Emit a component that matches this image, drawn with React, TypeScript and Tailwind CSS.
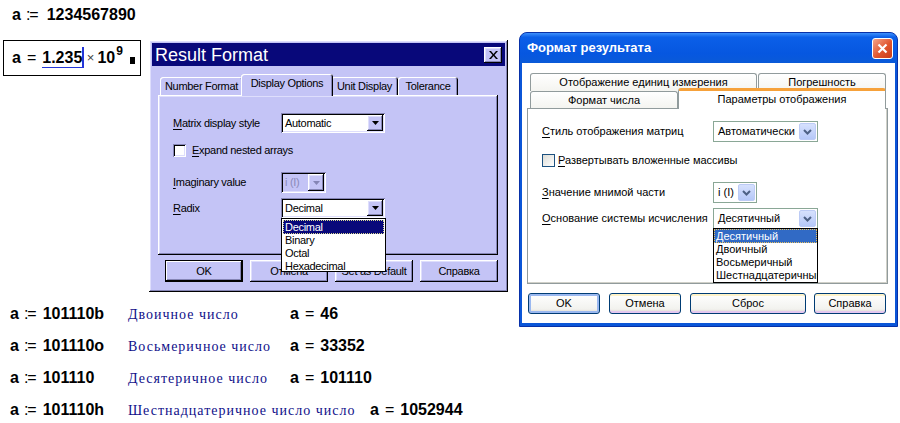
import React from "react";

/* win95 bevels for the lavender Mathcad dialog */
const raised =
  "shadow-[inset_-1px_-1px_0_#000,inset_1px_1px_0_#fff,inset_-2px_-2px_0_#8585b5,inset_2px_2px_0_#dedefc]";
const sunken =
  "shadow-[inset_1px_1px_0_#8585b5,inset_-1px_-1px_0_#fff,inset_2px_2px_0_#000,inset_-2px_-2px_0_#dedefc]";

function U({ children }: { children: React.ReactNode }) {
  return <span className="underline underline-offset-[2px]">{children}</span>;
}

function Arrow95({ color = "#000" }: { color?: string }) {
  return (
    <svg width="7" height="4" viewBox="0 0 7 4">
      <path d="M0 0h7L3.5 4z" fill={color} />
    </svg>
  );
}

function Combo95({
  width,
  text,
  disabled,
  children,
}: {
  width: string;
  text: string;
  disabled?: boolean;
  children?: React.ReactNode;
}) {
  return (
    <div
      className={`relative ${width} h-full p-[2px] flex ${sunken} ${
        disabled ? "bg-[#c4c4f6] text-[#8a8ab8]" : "bg-white"
      }`}
    >
      <div className="flex-1 pl-[2px] flex items-center">{text}</div>
      <div className={`w-[16px] h-full bg-[#c4c4f6] flex items-center justify-center ${raised}`}>
        <Arrow95 color={disabled ? "#8585b5" : "#000"} />
      </div>
      {children}
    </div>
  );
}

function Tab95({
  label,
  width,
  active,
}: {
  label: string;
  width: string;
  active?: boolean;
}) {
  return (
    <div
      className={`${width} rounded-t-[3px] bg-[#c4c4f6] flex items-center justify-center shadow-[inset_1px_1px_0_#fff,inset_-1px_0_0_#000,inset_-2px_0_0_#8585b5] ${
        active ? "h-[22px] -mx-[2px] -mb-[1px] z-10 pb-[3px]" : "h-[18px]"
      }`}
    >
      {label}
    </div>
  );
}

function Button95({ label, isDefault }: { label: string; isDefault?: boolean }) {
  return (
    <div
      className={`w-[78px] h-[22px] bg-[#c4c4f6] flex items-center justify-center ${
        isDefault
          ? "shadow-[inset_0_0_0_1px_#000,inset_-2px_-2px_0_#000,inset_2px_2px_0_#fff,inset_-3px_-3px_0_#8585b5]"
          : raised
      }`}
    >
      {label}
    </div>
  );
}

function ResultFormat() {
  return (
    <div
      className={`w-[359px] h-[252px] bg-[#c4c4f6] p-[3px] flex flex-col text-[11px] tracking-[-0.3px] ${raised}`}
    >
      {/* TITLE */}
      <div className="h-[23px] bg-[#08087a] flex items-center justify-between pl-[3px] pr-[3px]">
        <span className="text-white text-[18px] leading-none tracking-normal">Result Format</span>
        <div className={`w-[18px] h-[16px] bg-[#c4c4f6] flex items-center justify-center ${raised}`}>
          <svg width="9" height="8" viewBox="0 0 9 8">
            <path d="M0 0h2l2.5 3 2.5-3h2L5.5 4 9 8H7L4.5 5 2 8H0l3.5-4z" fill="#000" />
          </svg>
        </div>
      </div>

      <div className="pl-[6px] pr-[7px] pt-[8px]">
        {/* TABS */}
        <div className="flex items-end h-[21px] pl-[2px] relative z-10">
          <Tab95 label="Number Format" width="w-[83px]" />
          <Tab95 label="Display Options" width="w-[92px]" active />
          <Tab95 label="Unit Display" width="w-[67px]" />
          <Tab95 label="Tolerance" width="w-[60px]" />
        </div>

        {/* PANEL */}
        <div className={`h-[160px] pl-[15px] pt-[18px] ${raised}`}>
          <div className="flex items-center h-[20px]">
            <span className="w-[108px]">
              <U>M</U>atrix display style
            </span>
            <Combo95 width="w-[104px]" text="Automatic" />
          </div>
          <div className="flex items-center h-[13px] mt-[11px]">
            <div className={`w-[13px] h-[13px] bg-white ${sunken}`} />
            <span className="ml-[6px]">
              <U>E</U>xpand nested arrays
            </span>
          </div>
          <div className="flex items-center h-[21px] mt-[15px]">
            <span className="w-[108px]">
              <U>I</U>maginary value
            </span>
            <Combo95 width="w-[45px]" text="i (I)" disabled />
          </div>
          <div className="flex items-center h-[20px] mt-[5px]">
            <span className="w-[108px]">
              <U>R</U>adix
            </span>
            <Combo95 width="w-[104px]" text="Decimal">
              <div className="absolute left-0 top-full w-[105px] h-[54px] border border-black bg-white z-30 pt-[1px]">
                <div className="h-[14px] mx-[1px] px-[2px] flex items-center bg-[#08087a] text-white outline-1 outline-dotted outline-[#d8d890] -outline-offset-1">
                  Decimal
                </div>
                <div className="h-[13px] px-[3px] flex items-center">Binary</div>
                <div className="h-[13px] px-[3px] flex items-center">Octal</div>
                <div className="h-[13px] px-[3px] flex items-center">Hexadecimal</div>
              </div>
            </Combo95>
          </div>
        </div>

        {/* BUTTONS */}
        <div className="flex gap-[7px] mt-[5px] pl-[7px]">
          <Button95 label="OK" isDefault />
          <Button95 label="Отмена" />
          <Button95 label="Set as Default" />
          <Button95 label="Справка" />
        </div>
      </div>
    </div>
  );
}

/* XP styled russian dialog */
function ComboXP({
  width,
  text,
  children,
}: {
  width: string;
  text: string;
  children?: React.ReactNode;
}) {
  return (
    <div className={`relative ${width} h-full border border-[#8aa796] bg-white flex p-[1px]`}>
      <div className="flex-1 pl-[3px] flex items-center">{text}</div>
      <div className="w-[17px] h-full rounded-[2px] border border-[#bccbf5] bg-[linear-gradient(to_bottom,#d6e1fd,#b5c8f8)] flex items-center justify-center">
        <svg width="9" height="6" viewBox="0 0 9 6">
          <path d="M1 1l3.5 3.5L8 1" stroke="#4d6185" strokeWidth="2" fill="none" />
        </svg>
      </div>
      {children}
    </div>
  );
}

function TabXP({
  label,
  width,
  active,
}: {
  label: string;
  width: string;
  active?: boolean;
}) {
  return (
    <div
      className={`${width} flex items-center justify-center rounded-t-[3px] border border-b-0 border-[#919b9c] ${
        active
          ? "h-[21px] -mb-[1px] z-10 bg-white border-t-[3px] border-t-[#f6a13a] pb-[2px]"
          : "h-full bg-[linear-gradient(to_bottom,#ffffff,#f4f4f0)]"
      }`}
    >
      {label}
    </div>
  );
}

function ButtonXP({
  label,
  width,
  isDefault,
}: {
  label: string;
  width: string;
  isDefault?: boolean;
}) {
  return (
    <div
      className={`${width} h-[21px] rounded-[3px] border border-[#003c74] bg-[linear-gradient(to_bottom,#ffffff,#f2f2ee_80%,#d6d0c5)] flex items-center justify-center ${
        isDefault ? "shadow-[inset_0_0_0_2px_#9ab8f0]" : "shadow-[inset_0_-2px_0_#e5c8f0,inset_0_2px_0_#fff3c8]"
      }`}
    >
      {label}
    </div>
  );
}

function FormatDialog() {
  return (
    <div className="w-[379px] h-[295px] rounded-t-[8px] bg-[#0b56d8] border border-[#0831a8] flex flex-col text-[11px]">
      {/* TITLE */}
      <div className="h-[30px] rounded-t-[7px] bg-[linear-gradient(to_bottom,#3d90fb_0%,#0b5fe8_14%,#0657e0_70%,#0a5ad8_100%)] flex items-center justify-between pl-[7px] pr-[4px]">
        <span className="text-white font-bold text-[13px]">Формат результата</span>
        <div className="w-[21px] h-[21px] rounded-[3px] border border-white bg-[linear-gradient(135deg,#f5a58a,#e0552e_55%,#c83c1a)] flex items-center justify-center">
          <svg width="11" height="11" viewBox="0 0 11 11">
            <path d="M1.5 1.5l8 8M9.5 1.5l-8 8" stroke="#fff" strokeWidth="2.2" />
          </svg>
        </div>
      </div>

      <div className="flex-1 bg-white mx-[2px] mb-[3px] pl-[5px] pr-[7px] pt-[10px]">
        {/* TABS */}
        <div className="pl-[3px] pr-[1px]">
          <div className="flex h-[18px]">
            <TabXP label="Отображение единиц измерения" width="w-[227px]" />
            <TabXP label="Погрешность" width="w-[128px] ml-[1px]" />
          </div>
          <div className="flex items-end h-[17px] relative z-10">
            <TabXP label="Формат числа" width="w-[148px]" />
            <TabXP label="Параметры отображения" width="w-[208px]" active />
          </div>
        </div>

        {/* PANEL */}
        <div className="h-[176px] border border-[#919b9c] shadow-[inset_-1px_-1px_0_#d0d0c8] pl-[14px] pt-[12px]">
          <div className="flex items-center h-[21px]">
            <span className="w-[171px]">
              <U>С</U>тиль отображения матриц
            </span>
            <ComboXP width="w-[105px]" text="Автоматически" />
          </div>
          <div className="flex items-center h-[13px] mt-[12px]">
            <div className="w-[13px] h-[13px] border border-[#1c5180] bg-[linear-gradient(135deg,#dcdcd6,#ffffff)]" />
            <span className="ml-[3px]">
              <U>Р</U>азвертывать вложенные массивы
            </span>
          </div>
          <div className="flex items-center h-[21px] mt-[15px]">
            <span className="w-[171px]">
              <U>З</U>начение мнимой части
            </span>
            <ComboXP width="w-[44px]" text="i (I)" />
          </div>
          <div className="flex items-center h-[21px] mt-[5px]">
            <span className="w-[171px]">
              <U>О</U>снование системы исчисления
            </span>
            <ComboXP width="w-[105px]" text="Десятичный">
              <div className="absolute -left-[1px] top-full w-[105px] h-[55px] border border-black bg-white z-30 overflow-hidden whitespace-nowrap">
                <div className="h-[14px] px-[2px] flex items-center bg-[#316ac5] text-white outline-1 outline-dotted outline-[#e8c060] -outline-offset-1">
                  Десятичный
                </div>
                <div className="h-[13px] px-[2px] flex items-center">Двоичный</div>
                <div className="h-[13px] px-[2px] flex items-center">Восьмеричный</div>
                <div className="h-[13px] px-[2px] flex items-center">Шестнадцатеричный</div>
              </div>
            </ComboXP>
          </div>
        </div>

        {/* BUTTONS */}
        <div className="flex mt-[9px] pl-[1px]">
          <ButtonXP label="OK" width="w-[72px]" isDefault />
          <ButtonXP label="Отмена" width="w-[72px] ml-[9px]" />
          <ButtonXP label="Сброс" width="w-[116px] ml-[9px]" />
          <ButtonXP label="Справка" width="w-[72px] ml-[8px]" />
        </div>
      </div>
    </div>
  );
}

/* mathcad rows */
const rows = [
  { def: "101110b", note: "Двоичное число", res: "46", noteW: "w-[162px]" },
  { def: "101110o", note: "Восьмеричное число", res: "33352", noteW: "w-[162px]" },
  { def: "101110", note: "Десятеричное число", res: "101110", noteW: "w-[162px]" },
  { def: "101110h", note: "Шестнадцатеричное число число", res: "1052944", noteW: "w-[242px]" },
];

export default function App() {
  return (
    <div className="w-[900px] h-[423px] bg-white flex overflow-hidden font-['Liberation_Sans',Arial,sans-serif] text-black">
      <div className="w-[519px] shrink-0 flex flex-col">
        <div className="flex">
          <div className="w-[149px] shrink-0">
            <div className="h-[30px] pl-[12px] pt-[6px] flex text-[16px] font-bold leading-[18px]">
              <span>a</span>
              <span className="font-normal ml-[5px] mr-[9px] tracking-[-1px]">:=</span>
              <span>1234567890</span>
            </div>

            <div className="ml-[3px] mt-[10px] w-[138px] h-[36px] border border-black flex items-center pl-[8px] text-[16px] font-bold">
              <span>a</span>
              <span className="font-normal mx-[6px]">=</span>
              <span className="border-b-[1.5px] border-[#2436d8] leading-[18px]">1.235</span>
              <span className="w-[1.5px] h-[21px] bg-[#2436d8] mt-[-2px]" />
              <span className="font-normal text-[13px] text-[#444] mx-[3px]">×</span>
              <span>10</span>
              <span className="text-[12px] relative -top-[7px] ml-[1px]">9</span>
              <span className="w-[5px] h-[7px] bg-black ml-[7px] mt-[5px]" />
            </div>
          </div>

          <div className="mt-[40px]">
            <ResultFormat />
          </div>
        </div>

        {/* ROWS */}
        <div className="mt-[6px] flex flex-col">
          {rows.map((r) => (
            <div key={r.def} className="h-[32px] flex items-center pl-[10px] text-[16px] font-bold">
              <div className="w-[118px] flex">
                <span>a</span>
                <span className="font-normal ml-[5px] mr-[7px] tracking-[-1px]">:=</span>
                <span>{r.def}</span>
              </div>
              <div
                className={`${r.noteW} font-normal font-['Liberation_Serif',serif] text-[14px] tracking-[1px] text-[#10108a]`}
              >
                {r.note}
              </div>
              <span>a</span>
              <span className="font-normal mx-[6px]">=</span>
              <span>{r.res}</span>
            </div>
          ))}
        </div>
      </div>

      <div className="pt-[32px]">
        <FormatDialog />
      </div>
    </div>
  );
}
